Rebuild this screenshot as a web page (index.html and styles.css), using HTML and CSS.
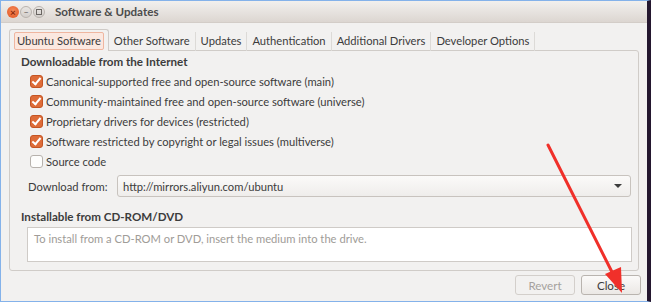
FILE: index.html
```html
<!DOCTYPE html>
<html lang="en">
<head>
    <meta charset="UTF-8">
    <title>Software &amp; Updates</title>
    <link rel="stylesheet" href="styles.css">
</head>
<body>
<div class="window">
    <!-- Title bar -->
    <div class="titlebar">
        <div class="wm-buttons">
            <span class="wm-btn close">&times;</span>
            <span class="wm-btn min">&ndash;</span>
            <span class="wm-btn max"><i></i></span>
        </div>
        <span class="title">Software &amp; Updates</span>
    </div>

    <div class="content">
        <!-- Tabs -->
        <div class="tabs">
            <div class="tab active"><span>Ubuntu Software</span></div>
            <div class="tab">Other Software</div>
            <div class="tab">Updates</div>
            <div class="tab">Authentication</div>
            <div class="tab">Additional Drivers</div>
            <div class="tab">Developer Options</div>
        </div>

        <div class="panel">
            <h3>Downloadable from the Internet</h3>
            <ul class="checks">
                <li><span class="box on"></span>Canonical-supported free and open-source software (main)</li>
                <li><span class="box on"></span>Community-maintained free and open-source software (universe)</li>
                <li><span class="box on"></span>Proprietary drivers for devices (restricted)</li>
                <li><span class="box on"></span>Software restricted by copyright or legal issues (multiverse)</li>
                <li><span class="box"></span>Source code</li>
            </ul>

            <div class="download-row">
                <span class="label">Download from:</span>
                <div class="combo">
                    <span>http://mirrors.aliyun.com/ubuntu</span>
                    <span class="arrow"></span>
                </div>
            </div>

            <h3 class="cd-title">Installable from CD-ROM/DVD</h3>
            <div class="cd-box">To install from a CD-ROM or DVD, insert the medium into the drive.</div>
        </div>

        <div class="actions">
            <button class="btn" disabled>Revert</button>
            <button class="btn">Close</button>
        </div>
    </div>

    <!-- annotation arrow -->
    <svg class="pointer" width="651" height="302" viewBox="0 0 651 302">
        <line x1="548" y1="145" x2="614" y2="276" stroke="#f0302a" stroke-width="3" stroke-linecap="round"/>
        <polygon points="622,293 605,274 621,267" fill="#f0302a"/>
    </svg>
</div>
</body>
</html>
```

FILE: styles.css
```css
/* Window frame */
body {
    margin: 0;
    width: 651px;
    height: 302px;
    overflow: hidden;
    font-family: 'Lato', 'Open Sans', sans-serif;
    font-size: 11.2px;
    color: #3c3c3c;
}

.window {
    position: relative;
    box-sizing: border-box;
    width: 651px;
    height: 302px;
    border-top: 1px solid #84b2ea;
    border-left: 1px solid #84b2ea;
    border-bottom: 1px solid #84b2ea;
    border-right: 4px solid #24172f;
    background-color: #f2f1f0;
    display: flex;
    flex-direction: column;
}

/* Title bar */
.titlebar {
    height: 21px;
    display: flex;
    align-items: center;
    padding-left: 6px;
    background: linear-gradient(#f2f0ee, #dcd6d1);
    border-bottom: 1px solid #d3cdc8;
}

.wm-buttons {
    display: flex;
    gap: 1px;
    margin-right: 10px;
}

.wm-btn {
    width: 12px;
    height: 12px;
    border-radius: 50%;
    font-size: 10px;
    line-height: 12px;
    text-align: center;
    box-sizing: border-box;
}

.wm-btn.close {
    background: radial-gradient(circle at 50% 40%, #f58a5a, #e2531f);
    color: #8a2a0c;
    font-weight: bold;
}

.wm-btn.min, .wm-btn.max {
    background: linear-gradient(#e9e6e3, #d3ceca);
    border: 1px solid #b9b3ae;
    color: #6a6662;
    font-size: 9px;
    line-height: 9px;
}

.wm-btn.max {
    display: flex;
    align-items: center;
    justify-content: center;
}

.wm-btn.max i {
    width: 4px;
    height: 4px;
    border: 1px solid #6a6662;
}

.title {
    font-weight: bold;
    font-size: 11.6px;
    color: #4c4c4c;
}

.content {
    flex: 1;
    padding: 8px 5px 0 8px;
    display: flex;
    flex-direction: column;
}

/* Tabs */
.tabs {
    display: flex;
    height: 20px;
    align-items: flex-end;
    position: relative;
    z-index: 1;
}

.tab {
    padding: 0 5px;
    height: 19px;
    line-height: 18px;
    border-right: 1px solid #dcdad7;
    color: #3c3c3c;
}

.tab.active {
    height: 21px;
    padding: 0 4px;
    background: #f2f1f0;
    border: 1px solid #cfcbc7;
    border-bottom: none;
    border-radius: 3px 3px 0 0;
    display: flex;
    align-items: center;
}

.tab.active span {
    padding: 0 2px;
    height: 16px;
    line-height: 16px;
    border: 1px solid #efb6a0;
    border-radius: 2px;
    background: #fbe8e0;
}

.panel {
    box-sizing: border-box;
    width: 630px;
    height: 221px;
    border: 1px solid #d0ccc8;
    border-radius: 0 3px 3px 3px;
    margin-top: -1px;
    padding: 3px 6px 0 11px;
}

h3 {
    margin: 0;
    font-size: 11.6px;
    font-weight: bold;
    height: 16px;
    line-height: 16px;
}

.checks {
    list-style: none;
    margin: 1px 0 0 0;
    padding: 0 0 0 9px;
}

.checks li {
    height: 20px;
    display: flex;
    align-items: center;
}

.box {
    box-sizing: border-box;
    width: 13px;
    height: 13px;
    border-radius: 3px;
    border: 1px solid #b7b2ad;
    background: #fdfdfc;
    margin-right: 3px;
    position: relative;
}

.box.on {
    background: #de6c38;
    border-color: #c45423;
}

.box.on::after {
    content: "";
    position: absolute;
    left: 3px;
    top: 0px;
    width: 3px;
    height: 7px;
    border: solid #fff;
    border-width: 0 2px 2px 0;
    transform: rotate(40deg);
}

.download-row {
    display: flex;
    align-items: center;
    margin-top: 4px;
    padding-left: 7px;
}

.label {
    width: 89px;
}

.combo {
    box-sizing: border-box;
    flex: 1;
    height: 22px;
    margin-right: 1px;
    border: 1px solid #c8c3be;
    border-radius: 3px;
    background: linear-gradient(#fbfaf9, #efedeb);
    display: flex;
    align-items: center;
    justify-content: space-between;
    padding: 0 8px 0 5px;
}

.arrow {
    width: 0;
    height: 0;
    border-left: 4px solid transparent;
    border-right: 4px solid transparent;
    border-top: 4px solid #3c3c3c;
}

.cd-title {
    margin-top: 12px;
}

.cd-box {
    box-sizing: border-box;
    height: 35px;
    margin: 2px 0 0 6px;
    width: 605px;
    background: #fff;
    border: 1px solid #cfcbc7;
    padding: 4px 6px;
    color: #a09c98;
}

/* Bottom buttons */
.actions {
    display: flex;
    justify-content: flex-end;
    gap: 6px;
    margin-top: 4px;
    padding-right: 1px;
}

.btn {
    font-family: 'Lato', sans-serif;
    font-size: 11.6px;
    width: 60px;
    height: 20px;
    padding: 0;
    border: 1px solid #b9b4af;
    border-radius: 3px;
    background: linear-gradient(#fbfaf9, #ebe8e5);
    color: #3c3c3c;
}

.btn:disabled {
    color: #a5a19d;
    border-color: #d3cfcb;
    background: #f2f1f0;
}

.pointer {
    position: absolute;
    left: -1px;
    top: -1px;
    pointer-events: none;
}
```
